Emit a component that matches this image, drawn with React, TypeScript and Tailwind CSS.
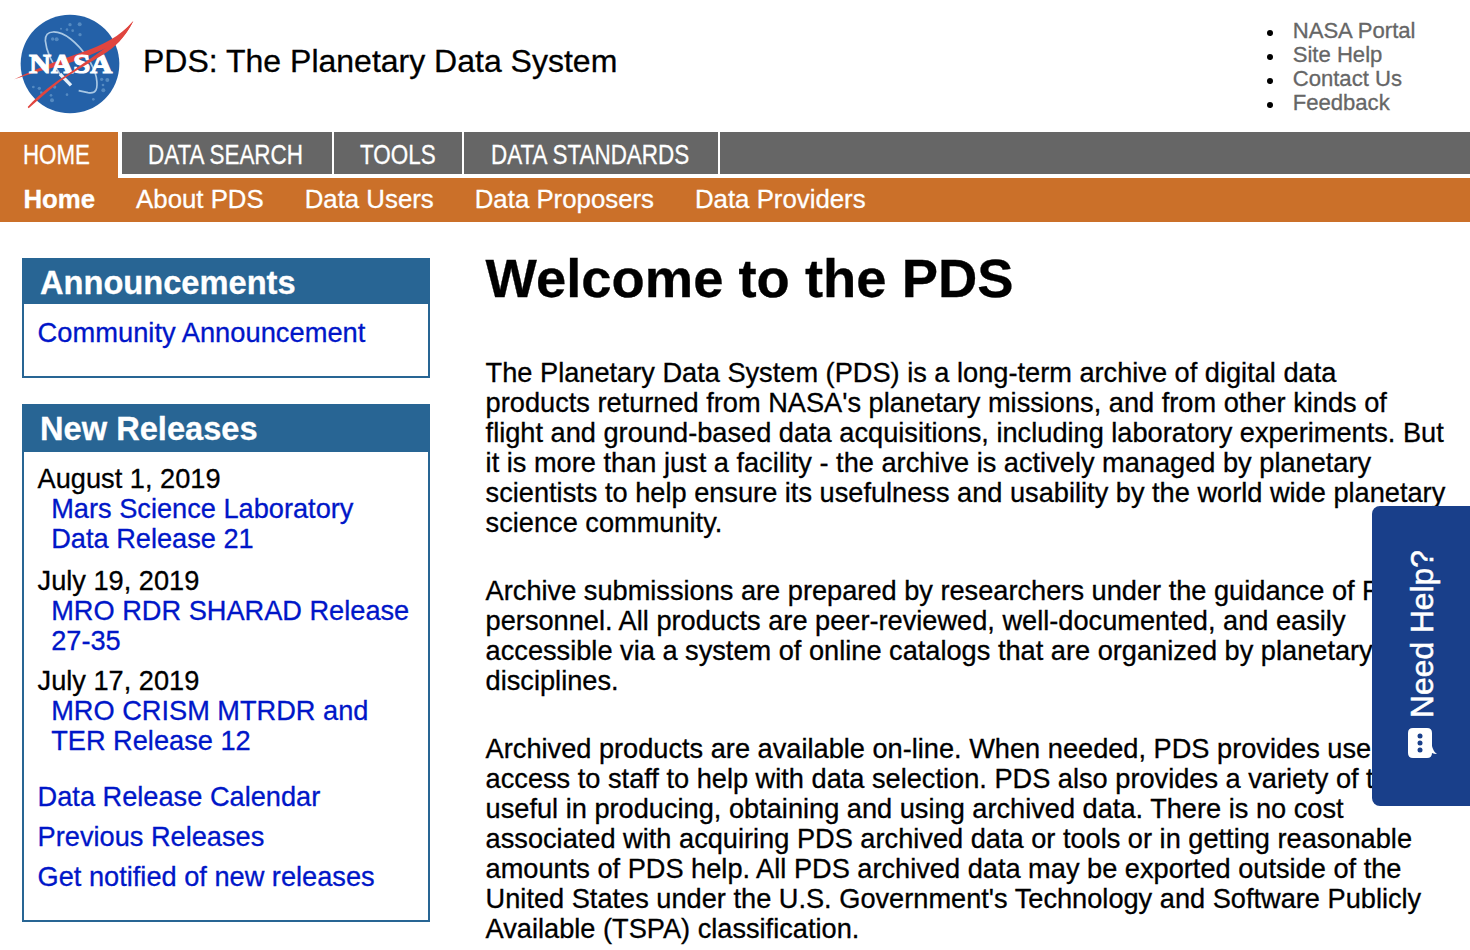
import React from "react";

function NasaLogo() {
  return (
    <svg width="150" height="130" viewBox="0 0 450 390" className="block shrink-0">
      <circle cx="210" cy="192" r="148" fill="#2461a8" />
      <g fill="#6fa0cf" opacity="0.65">
        <circle cx="210" cy="74" r="5" />
        <circle cx="239" cy="73" r="6" />
        <circle cx="183" cy="86" r="3" />
        <circle cx="218" cy="92" r="4" />
        <circle cx="201" cy="89" r="4" />
        <circle cx="240" cy="104" r="5" />
        <circle cx="158" cy="117" r="5" />
        <circle cx="170" cy="118" r="6" />
        <circle cx="100" cy="261" r="4" />
        <circle cx="118" cy="265" r="5" />
        <circle cx="124" cy="278" r="4" />
        <circle cx="153" cy="286" r="4" />
        <circle cx="156" cy="301" r="6" />
        <circle cx="164" cy="261" r="5" />
        <circle cx="201" cy="284" r="4" />
        <circle cx="305" cy="238" r="5" />
        <circle cx="322" cy="240" r="6" />
        <circle cx="309" cy="255" r="4" />
        <circle cx="310" cy="271" r="6" />
        <circle cx="280" cy="298" r="4" />
      </g>
      <path d="M182 225C156 190 139 156 136 122C135 88 174 88 212 117C248 145 281 195 289 232C295 269 288 282 264 278L236 272" fill="none" stroke="#a9c8e4" strokeWidth="5" />
      <path d="M180 222L213 256" fill="none" stroke="#e5f0fa" strokeWidth="10" />
      <path d="M43 238C80 220 130 199 170 184L246 157C310 134 358 111 400 63C386 92 366 118 342 135L300 152C260 170 225 184 190 194C140 208 85 222 43 238Z" fill="#e0453f" />
      <text x="87" y="220" textLength="250" lengthAdjust="spacingAndGlyphs" fill="#fff" stroke="#fff" strokeWidth="3.5" fontFamily="'Liberation Serif', serif" fontWeight="700" fontSize="84">NASA</text>
      <path d="M400 63C374 115 345 142 306 166C260 194 219 216 182 243C146 271 117 297 86 325L83 321C122 278 163 248 208 219C252 190 295 160 342 124Z" fill="#e0453f" />
    </svg>
  );
}

const tabs = [
  { label: "DATA SEARCH", cls: "w-[210px]", pad: "ml-[26px]" },
  { label: "TOOLS", cls: "w-[128px]", pad: "ml-[26px]" },
  { label: "DATA STANDARDS", cls: "w-[254px]", pad: "ml-[27px]" },
];

const paragraphs = [
  [
    "The Planetary Data System (PDS) is a long-term archive of digital data",
    "products returned from NASA's planetary missions, and from other kinds of",
    "flight and ground-based data acquisitions, including laboratory experiments. But",
    "it is more than just a facility - the archive is actively managed by planetary",
    "scientists to help ensure its usefulness and usability by the world wide planetary",
    "science community.",
  ],
  [
    "Archive submissions are prepared by researchers under the guidance of PDS",
    "personnel. All products are peer-reviewed, well-documented, and easily",
    "accessible via a system of online catalogs that are organized by planetary",
    "disciplines.",
  ],
  [
    "Archived products are available on-line. When needed, PDS provides user",
    "access to staff to help with data selection. PDS also provides a variety of tools",
    "useful in producing, obtaining and using archived data. There is no cost",
    "associated with acquiring PDS archived data or tools or in getting reasonable",
    "amounts of PDS help. All PDS archived data may be exported outside of the",
    "United States under the U.S. Government's Technology and Software Publicly",
    "Available (TSPA) classification.",
  ],
];

const releases = [
  { date: "August 1, 2019", lines: ["Mars Science Laboratory", "Data Release 21"], gap: "mb-3" },
  { date: "July 19, 2019", lines: ["MRO RDR SHARAD Release", "27-35"], gap: "mb-2.5" },
  { date: "July 17, 2019", lines: ["MRO CRISM MTRDR and", "TER Release 12"], gap: "mb-[26px]" },
];

export default function App() {
  return (
    <div className="relative h-[950px] w-[1470px] overflow-hidden bg-white font-['Liberation_Sans',Arial,sans-serif] text-[27.2px] leading-[30px] whitespace-nowrap text-black [-webkit-text-stroke:0.3px]">
      <header className="flex h-[132px] items-start">
        <NasaLogo />
        <h1 className="-ml-[7px] pt-[43px] text-[32px] leading-9">PDS: The Planetary Data System</h1>
        <ul className="mt-[19px] mr-[54.5px] ml-auto text-[22.1px] leading-6 text-[#666]">
          {["NASA Portal", "Site Help", "Contact Us", "Feedback"].map((t) => (
            <li key={t} className="flex items-center">
              <span className="mt-1 mr-5 size-1.5 rounded-full bg-black" />
              <a>{t}</a>
            </li>
          ))}
        </ul>
      </header>

      <nav className="flex h-[46px] text-[27.2px] text-white">
        <a className="mr-1 w-[118px] bg-[#cb7029] pt-2 pl-[23px]">
          <span className="inline-block origin-left scale-x-[.82]">HOME</span>
        </a>
        <div className="flex h-[42px] flex-1 bg-[#666]">
          {tabs.map((t) => (
            <a key={t.label} className={`${t.cls} box-content h-[30px] border-r-2 border-white pt-2 pb-1`}>
              <span className={`${t.pad} inline-block origin-left scale-x-[.825]`}>{t.label}</span>
            </a>
          ))}
        </div>
      </nav>
      <nav className="flex h-11 gap-[41px] bg-[#cb7029] pt-[6px] pl-[23.4px] text-[25.8px] text-white">
        <a className="font-bold">Home</a>
        {["About PDS", "Data Users", "Data Proposers", "Data Providers"].map((t) => (
          <a key={t}>{t}</a>
        ))}
      </nav>

      <div className="flex">
        <aside className="mt-9 ml-[22px] w-[408px] shrink-0">
          <section className="mb-[26px] h-[120px] border-2 border-[#286594]">
            <h2 className="h-11 bg-[#286594] pt-1 pl-4 text-[32.64px] leading-[38px] font-bold text-white">Announcements</h2>
            <a className="block pt-[14px] pl-[13.6px] text-[27.3px] text-[#0016c8]">Community Announcement</a>
          </section>
          <section className="h-[518px] border-2 border-[#286594]">
            <h2 className="h-[46px] bg-[#286594] pt-1 pl-4 text-[32.64px] leading-[38px] font-bold text-white">New Releases</h2>
            <div className="pt-3 pl-[13.6px]">
              {releases.map((r) => (
                <div key={r.date} className={r.gap}>
                  <div>{r.date}</div>
                  {r.lines.map((l) => (
                    <a key={l} className="block pl-[13.6px] text-[#0016c8]">{l}</a>
                  ))}
                </div>
              ))}
              <div className="flex flex-col gap-2.5 text-[#0016c8]">
                <a>Data Release Calendar</a>
                <a>Previous Releases</a>
                <a>Get notified of new releases</a>
              </div>
            </div>
          </section>
        </aside>
        <main className="pt-[26px] pl-[55.6px]">
          <h2 className="mb-12 text-[54.4px] leading-[62px] font-bold">Welcome to the PDS</h2>
          {paragraphs.map((p) => (
            <p key={p[0]} className="mb-[38px]">
              {p.map((l) => (
                <span key={l} className="block">{l}</span>
              ))}
            </p>
          ))}
        </main>
      </div>

      <button className="absolute top-[506px] right-0 flex h-[300px] w-[98px] flex-col items-center justify-center rounded-l-lg bg-[#193f8a] pl-[2px] text-white [-webkit-text-stroke:0.5px]">
        <span className="-mt-0.5 rotate-180 text-[31.8px] leading-[38px] [writing-mode:vertical-rl]">Need Help?</span>
        <svg width="30" height="33" viewBox="0 0 30 33" className="mt-[9px] block">
          <path d="M6 1H20Q25 1 25 6V19Q26 24 30 27Q27 27 25 26Q25 31 20 31H6Q1 31 1 26V6Q1 1 6 1Z" fill="#fff" />
          <circle cx="13" cy="9" r="2.5" fill="#193f8a" />
          <circle cx="13" cy="16" r="2.5" fill="#193f8a" />
          <circle cx="13" cy="23" r="2.5" fill="#193f8a" />
        </svg>
      </button>
    </div>
  );
}
